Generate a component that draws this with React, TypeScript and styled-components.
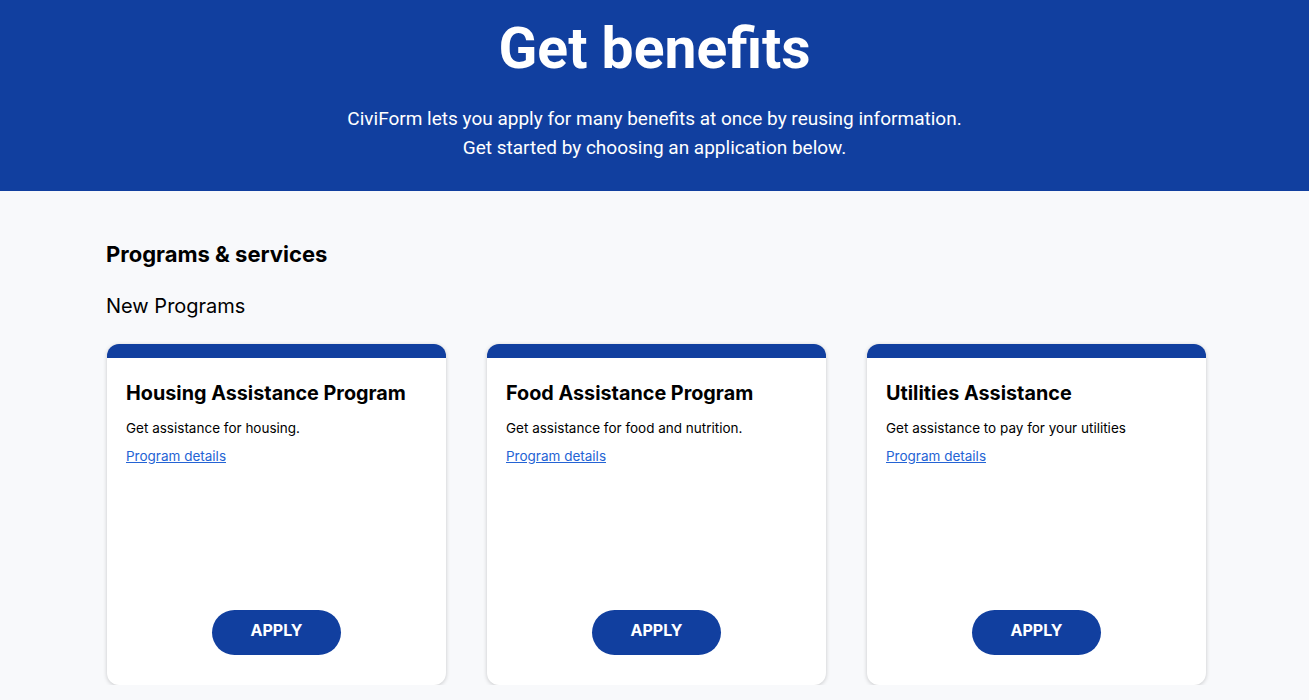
import React from "react";
import styled, { createGlobalStyle } from "styled-components";

const Global = createGlobalStyle`
  html, body { margin: 0; padding: 0; }
  body { background: #f8f9fb; font-family: Inter, "Noto Sans", sans-serif; color: #000; }
  * { box-sizing: border-box; }
`;

const Hero = styled.header`
  background: #113f9f;
  color: #fff;
  height: 191px;
  display: flex;
  flex-direction: column;
  align-items: center;
  padding-top: 14px;
  font-family: Roboto, "Liberation Sans", sans-serif;
`;

const HeroTitle = styled.h1`
  margin: 0;
  font-size: 57px;
  font-weight: 700;
  line-height: 70px;
`;

const HeroText = styled.p`
  margin: 20px 0 0;
  font-size: 19px;
  line-height: 29px;
  text-align: center;
`;

const Main = styled.main`
  padding: 48px 106px 0;
`;

const SectionTitle = styled.h2`
  margin: 0;
  font-size: 22px;
  font-weight: 700;
  line-height: 30px;
`;

const SubTitle = styled.h3`
  margin: 22px 0 0;
  font-size: 20px;
  font-weight: 400;
  line-height: 30px;
`;

const Grid = styled.div`
  margin-top: 23px;
  display: grid;
  grid-template-columns: repeat(3, 339px);
  gap: 41px;
  padding-left: 1px;
`;

const Card = styled.article`
  background: #fff;
  border-radius: 12px;
  border-top: 14px solid #113f9f;
  box-shadow: 0 1px 4px rgba(0, 0, 0, 0.2);
  height: 341px;
  display: flex;
  flex-direction: column;
  padding: 20px 19px 30px;
`;

const CardTitle = styled.h4`
  margin: 0;
  font-size: 19.8px;
  font-weight: 700;
  line-height: 30px;
`;

const CardText = styled.p`
  margin: 10px 0 0;
  font-size: 13.5px;
  line-height: 20px;
`;

const DetailsLink = styled.a`
  margin-top: 8px;
  font-size: 13.5px;
  line-height: 20px;
  color: #2463d4;
  text-decoration: underline;
  align-self: flex-start;
`;

const Apply = styled.button`
  margin-top: auto;
  align-self: center;
  width: 129px;
  height: 45px;
  border: none;
  border-radius: 23px;
  background: #113f9f;
  color: #fff;
  font-family: Inter, sans-serif;
  font-weight: 700;
  font-size: 16px;
  padding-bottom: 6px;
`;

const programs = [
  { title: "Housing Assistance Program", desc: "Get assistance for housing." },
  { title: "Food Assistance Program", desc: "Get assistance for food and nutrition." },
  { title: "Utilities Assistance", desc: "Get assistance to pay for your utilities" },
];

export default function App() {
  return (
    <>
      <Global />
      <Hero>
        <HeroTitle>Get benefits</HeroTitle>
        <HeroText>
          CiviForm lets you apply for many benefits at once by reusing information.
          <br />
          Get started by choosing an application below.
        </HeroText>
      </Hero>
      <Main>
        <SectionTitle>Programs &amp; services</SectionTitle>
        <SubTitle>New Programs</SubTitle>
        <Grid>
          {programs.map((p) => (
            <Card key={p.title}>
              <CardTitle>{p.title}</CardTitle>
              <CardText>{p.desc}</CardText>
              <DetailsLink href="#">Program details</DetailsLink>
              <Apply>APPLY</Apply>
            </Card>
          ))}
        </Grid>
      </Main>
    </>
  );
}
